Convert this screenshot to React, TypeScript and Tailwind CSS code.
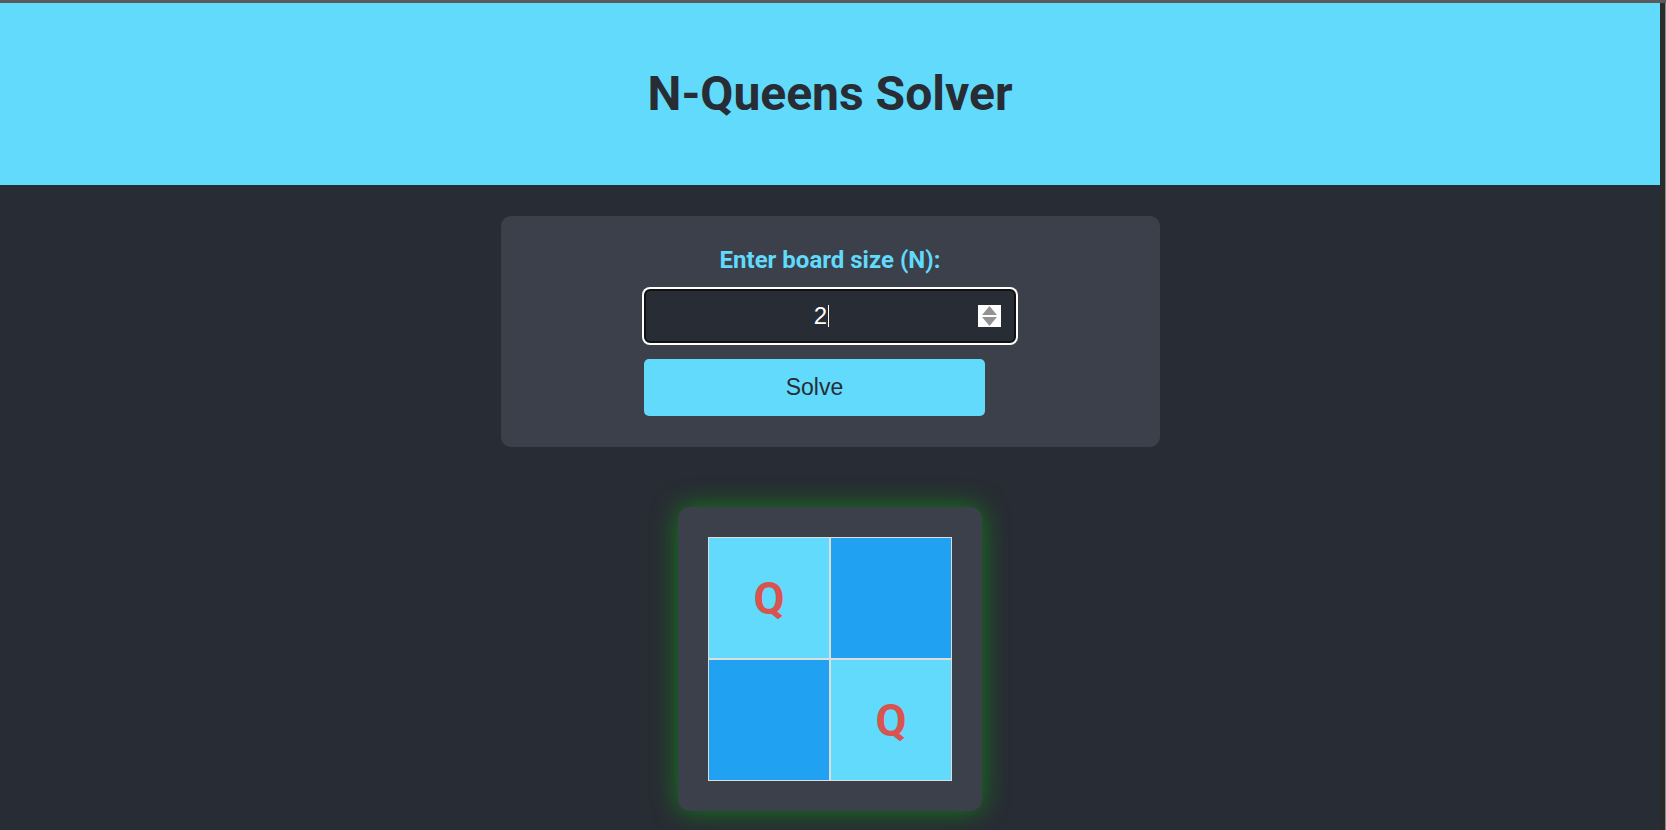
import React from "react";

const solution = [0, 1]; // queen column for each row

function Spinner() {
  return (
    <div className="flex h-[22px] w-[23px] flex-col items-center justify-center gap-[2px] bg-white">
      <svg width="15" height="9" viewBox="0 0 15 9">
        <path d="M7.5 0 L15 9 L0 9 Z" fill="#939393" />
      </svg>
      <svg width="15" height="9" viewBox="0 0 15 9">
        <path d="M0 0 L15 0 L7.5 9 Z" fill="#939393" />
      </svg>
    </div>
  );
}

function Board({ size, queens }: { size: number; queens: number[] }) {
  return (
    <div className="grid grid-cols-2">
      {Array.from({ length: size * size }).map((_, i) => {
        const r = Math.floor(i / size);
        const c = i % size;
        const light = (r + c) % 2 === 0;
        return (
          <div
            key={i}
            className={
              "flex h-[122px] w-[122px] items-center justify-center border border-[#dddddd] " +
              (light ? "bg-[#61dafb]" : "bg-[#21a1f1]")
            }
          >
            {queens[r] === c && (
              <span className="text-[45px] font-bold leading-none text-[#d9534f]">Q</span>
            )}
          </div>
        );
      })}
    </div>
  );
}

export default function App() {
  return (
    <div className="flex min-h-screen flex-col bg-[#282c34] font-['Roboto',sans-serif]">
      <div className="h-[3px] bg-[#5a5a5a]" />
      <div className="flex flex-1">
        <main className="flex flex-1 flex-col items-center">
          <header className="flex h-[182px] w-full items-center justify-center bg-[#61dafb]">
            <h1 className="text-[48px] font-bold text-[#282c34]">N-Queens Solver</h1>
          </header>

          <section className="mt-[31px] flex w-[659px] flex-col items-center rounded-[10px] bg-[#3c404a] px-[30px] pt-[30px] pb-[31px]">
            <label className="mb-[15px] text-[24px] leading-[28px] font-bold text-[#61dafb]">
              Enter board size (N):
            </label>
            <div className="flex w-[372px] flex-col items-start">
              <div className="flex h-[54px] w-full items-center rounded-[6px] border-2 border-[#111111] bg-[#282c34] pr-[13px] pl-[19px] ring-2 ring-white">
                <div className="flex flex-1 items-center justify-center font-['Liberation_Sans',Arial,sans-serif] text-[24px] leading-none text-white">
                  <span>2</span>
                  <span className="ml-[1px] h-[22px] w-[1px] bg-white" />
                </div>
                <Spinner />
              </div>
              <button className="mt-[16px] h-[57px] w-[341px] rounded-[5px] bg-[#61dafb] font-['Liberation_Sans',Arial,sans-serif] text-[23px] text-[#282c34]">
                Solve
              </button>
            </div>
          </section>

          <div className="mt-[60px] rounded-[12px] bg-[#3c404a] p-[30px] shadow-[0_0_26px_rgba(0,190,0,0.55)]">
            <Board size={2} queens={solution} />
          </div>
        </main>
        <div className="w-[6px] border-r border-[#8a8a8a] bg-[#2b2b2b]" />
      </div>
    </div>
  );
}
